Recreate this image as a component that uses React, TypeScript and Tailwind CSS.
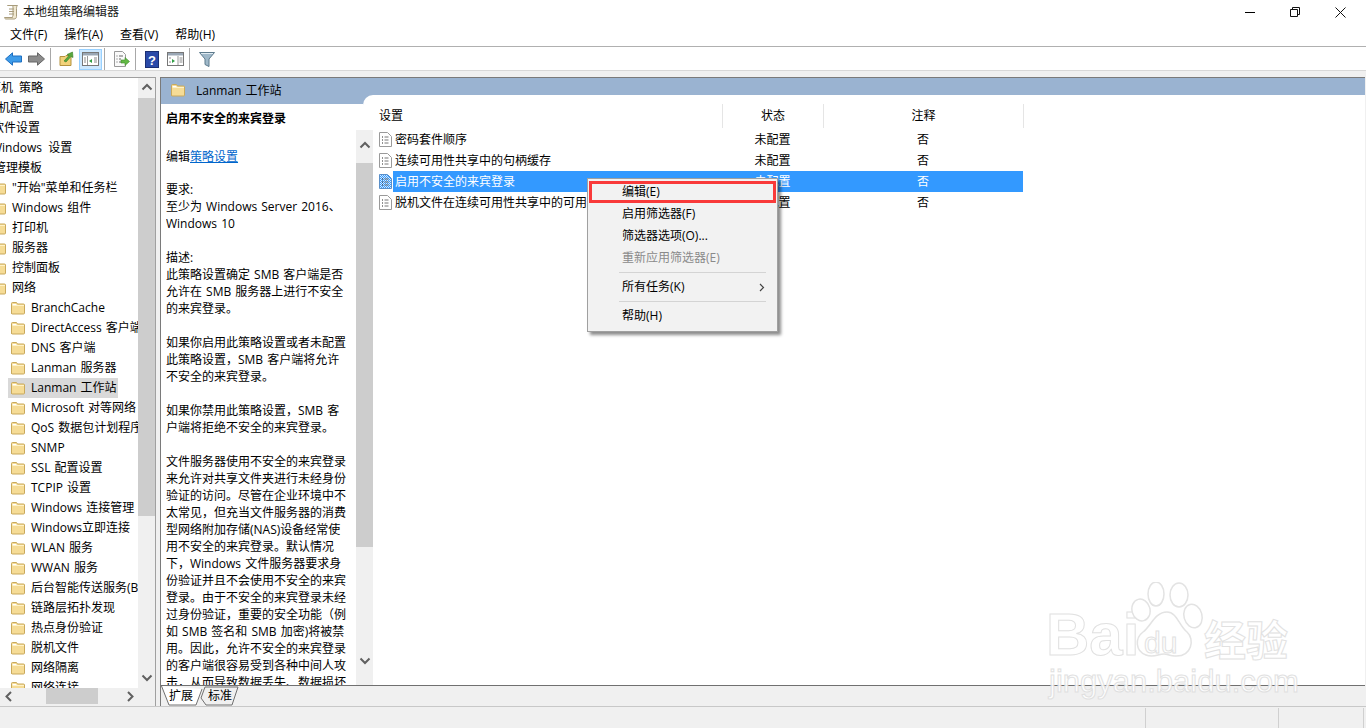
import React from 'react';

const FONT = "font-['Open_Sans','Noto_Sans_CJK_SC',sans-serif]";

const Folder = ({ className = '' }: { className?: string }) => (
  <svg width="16" height="14" viewBox="0 0 16 14" className={className}>
    <path d="M1.5 12.5V2.5q0-1 1-1h4l1 1.5h6q1 0 1 1v8q0 1-1 1h-11q-1 0-1-1z" fill="#f6dc96" stroke="#c9a95c" />
    <path d="M2.5 4.5h11.5" stroke="#fff2c8" />
    <path d="M2.5 3.5h4" stroke="#fff" />
  </svg>
);

const SettingIcon = ({ selected = false }: { selected?: boolean }) => (
  <svg width="13" height="15" viewBox="0 0 13 15" className="shrink-0">
    <defs>
      <pattern id="sel" width="2" height="2" patternUnits="userSpaceOnUse">
        <rect width="2" height="2" fill="#3399ff" />
        <rect width="1" height="1" fill="#d7e9fb" />
        <rect x="1" y="1" width="1" height="1" fill="#d7e9fb" />
      </pattern>
    </defs>
    <path d="M0.5 0.5h8l4 4v10h-12z" fill={selected ? 'url(#sel)' : '#fff'} stroke={selected ? '#5a8fc8' : '#9a9a9a'} />
    <path d="M3 5h1M3 8h1M3 11h1" stroke="#222" strokeWidth="1.2" />
    <path d="M5.5 5h4M5.5 8h4M5.5 11h4" stroke="#777" />
  </svg>
);

const Chevron = ({ dir }: { dir: 'up' | 'down' | 'left' | 'right' }) => {
  const d = {
    up: 'M1.5 6.5L6 2l4.5 4.5',
    down: 'M1.5 2.5L6 7l4.5-4.5',
    left: 'M8 1L3.5 5.5 8 10',
    right: 'M4 1l4.5 4.5L4 10',
  }[dir];
  return (
    <svg width="12" height="11" viewBox="0 0 12 11">
      <path d={d} fill="none" stroke="#606060" strokeWidth="2" />
    </svg>
  );
};

const L1 = '-ml-[9px]';
const L2 = 'ml-[10px]';

const treeRows: { label: string; cls: string; folder?: boolean }[] = [
  { label: '算机 策略', cls: '-ml-[11px] [word-spacing:3px]' },
  { label: '算机配置', cls: '-ml-[14px]' },
  { label: '软件设置', cls: '-ml-[8px]' },
  { label: 'Windows 设置', cls: '-ml-[9px] [word-spacing:3px]' },
  { label: '管理模板', cls: '-ml-[6px]' },
  { label: '"开始"菜单和任务栏', cls: L1, folder: true },
  { label: 'Windows 组件', cls: L1, folder: true },
  { label: '打印机', cls: L1, folder: true },
  { label: '服务器', cls: L1, folder: true },
  { label: '控制面板', cls: L1, folder: true },
  { label: '网络', cls: L1, folder: true },
  { label: 'BranchCache', cls: L2, folder: true },
  { label: 'DirectAccess 客户端', cls: L2, folder: true },
  { label: 'DNS 客户端', cls: L2, folder: true },
  { label: 'Lanman 服务器', cls: L2, folder: true },
  { label: 'Lanman 工作站', cls: 'ml-[8px] pl-[2px] pr-[1px] bg-[#d9d9d9]', folder: true },
  { label: 'Microsoft 对等网络', cls: L2, folder: true },
  { label: 'QoS 数据包计划程序', cls: L2, folder: true },
  { label: 'SNMP', cls: L2, folder: true },
  { label: 'SSL 配置设置', cls: L2, folder: true },
  { label: 'TCPIP 设置', cls: L2, folder: true },
  { label: 'Windows 连接管理', cls: L2, folder: true },
  { label: 'Windows立即连接', cls: L2, folder: true },
  { label: 'WLAN 服务', cls: L2, folder: true },
  { label: 'WWAN 服务', cls: L2, folder: true },
  { label: '后台智能传送服务(BITS)', cls: L2, folder: true },
  { label: '链路层拓扑发现', cls: L2, folder: true },
  { label: '热点身份验证', cls: L2, folder: true },
  { label: '脱机文件', cls: L2, folder: true },
  { label: '网络隔离', cls: L2, folder: true },
  { label: '网络连接', cls: L2, folder: true },
];

const descLines = [
  '要求:',
  '至少为 Windows Server 2016、',
  'Windows 10',
  '',
  '描述:',
  '此策略设置确定 SMB 客户端是否',
  '允许在 SMB 服务器上进行不安全',
  '的来宾登录。',
  '',
  '如果你启用此策略设置或者未配置',
  '此策略设置\uFF0CSMB 客户端将允许',
  '不安全的来宾登录。',
  '',
  '如果你禁用此策略设置\uFF0CSMB 客',
  '户端将拒绝不安全的来宾登录。',
  '',
  '文件服务器使用不安全的来宾登录',
  '来允许对共享文件夹进行未经身份',
  '验证的访问。尽管在企业环境中不',
  '太常见\uFF0C但充当文件服务器的消费',
  '型网络附加存储(NAS)设备经常使',
  '用不安全的来宾登录。默认情况',
  '下\uFF0CWindows 文件服务器要求身',
  '份验证并且不会使用不安全的来宾',
  '登录。由于不安全的来宾登录未经',
  '过身份验证\uFF0C重要的安全功能\uFF08例',
  '如 SMB 签名和 SMB 加密)将被禁',
  '用。因此\uFF0C允许不安全的来宾登录',
  '的客户端很容易受到各种中间人攻',
  '击\uFF0C从而导致数据丢失、数据损坏',
];

const settings = [
  { name: '密码套件顺序' },
  { name: '连续可用性共享中的句柄缓存' },
  { name: '启用不安全的来宾登录', selected: true },
  { name: '脱机文件在连续可用性共享中的可用性' },
];

const ToolSep = () => <div className="w-px h-[22px] bg-[#a8a8a8]" />;

const Toolbar = () => (
  <div className="h-[23px] flex items-center bg-white pt-[1px]">
    <svg width="17" height="14" viewBox="0 0 17 14" className="ml-[5px]">
      <path d="M0.5 7L7.5 0.8V4h9v6h-9v3.2z" fill="#3d9be9" stroke="#1f6fc0" />
    </svg>
    <svg width="17" height="14" viewBox="0 0 17 14" className="ml-[6px]">
      <path d="M16.5 7L9.5 0.8V4h-9v6h9v3.2z" fill="#8c8c8c" stroke="#666" />
    </svg>
    <div className="ml-[5px]"><ToolSep /></div>
    <svg width="16" height="16" viewBox="0 0 16 16" className="ml-[8px]">
      <path d="M1 14.5V5.500h5l1-1h5v10z" fill="#f2d27a" stroke="#b4923f" />
      <path d="M5 10L10 4.500 8 3.500 13.500 1 14 6.500 12 5.500 7 11z" fill="#58a83c" stroke="#3b7d26" strokeWidth="0.6" />
    </svg>
    <div className="ml-[4px] w-[23px] h-[21px] bg-[#cce8ff] border border-[#99d1ff] flex items-center justify-center">
      <svg width="17" height="14" viewBox="0 0 17 14">
        <rect x="0.5" y="0.5" width="16" height="13" fill="#fff" stroke="#777" />
        <rect x="1" y="1" width="15" height="2.5" fill="#9aa7b5" />
        <path d="M10 7v4L7 9z" fill="#2f9e44" />
        <path d="M5.5 4v9" stroke="#999" />
        <path d="M2 6h2M2 8h2M2 10h2M12 6h3M12 8h3M12 10h3" stroke="#8a8a8a" />
      </svg>
    </div>
    <div className="ml-[2px]"><ToolSep /></div>
    <svg width="17" height="16" viewBox="0 0 17 16" className="ml-[8px]">
      <path d="M1.5 0.5h8l3 3v12h-11z" fill="#fafafa" stroke="#999" />
      <path d="M3.5 5h1M3.5 8h1M3.5 11h1M6 5h4M6 8h2M6 11h2" stroke="#666" />
      <path d="M8 9h4V6.5L16.5 10.5 12 14.5v-2.5H8z" fill="#62b945" stroke="#3f8a2a" strokeWidth="0.6" />
    </svg>
    <div className="ml-[5px]"><ToolSep /></div>
    <svg width="14" height="17" viewBox="0 0 14 17" className="ml-[9px]">
      <rect x="0.5" y="0.5" width="13" height="16" fill="#2b4aa8" stroke="#1b2f73" />
      <text x="7" y="13.5" textAnchor="middle" fontSize="13" fontWeight="700" fill="#fff" fontFamily="Liberation Sans">?</text>
    </svg>
    <svg width="17" height="14" viewBox="0 0 17 14" className="ml-[8px]">
      <rect x="0.5" y="0.5" width="16" height="13" fill="#fff" stroke="#777" />
      <rect x="1" y="1" width="15" height="2.5" fill="#9aa7b5" />
      <path d="M5 7v4L8 9z" fill="#2f9e44" />
      <path d="M11 4v9" stroke="#999" />
      <path d="M2 6h2M2 10h2M12.5 6h3M12.5 8h3M12.5 10h3" stroke="#8a8a8a" />
    </svg>
    <div className="ml-[5px]"><ToolSep /></div>
    <svg width="16" height="17" viewBox="0 0 16 17" className="ml-[9px]">
      <path d="M0.5 1.5h15L10 8v7.5l-4-2V8z" fill="#9fb8c9" stroke="#5d7a8c" />
      <path d="M2 2.5h12" stroke="#dfeaf1" />
    </svg>
  </div>
);

const TreePane = () => (
  <div className="w-[156px] shrink-0 bg-[#f0f0f0] border-t border-r border-[#a0a0a0] flex flex-col">
    <div className="h-[610px] flex">
      <div className="w-[138px] bg-white overflow-hidden">
        {treeRows.map((row) => (
          <div key={row.label} className="h-5 flex items-center whitespace-nowrap">
            {row.folder ? (
              <div className={`flex items-center h-5 ${row.cls}`}>
                <Folder className="shrink-0 mr-[5px]" />
                <span>{row.label}</span>
              </div>
            ) : (
              <span className={row.cls}>{row.label}</span>
            )}
          </div>
        ))}
      </div>
      <div className="w-[17px] bg-[#f0f0f0] flex flex-col">
        <div className="h-[20px] flex items-center justify-center"><Chevron dir="up" /></div>
        <div className="h-[418px] bg-[#cdcdcd]" />
        <div className="flex-1" />
        <div className="h-[20px] flex items-center justify-center"><Chevron dir="down" /></div>
      </div>
    </div>
    <div className="h-[16px] flex items-center">
      <div className="w-[46px] pl-[3px]"><Chevron dir="left" /></div>
      <div className="w-[52px] h-full bg-[#cdcdcd]" />
      <div className="ml-[26px]"><Chevron dir="right" /></div>
    </div>
  </div>
);

const DescPane = () => (
  <div className="w-[202px] shrink-0 bg-[#9ab3d1] relative z-10">
    <div className="h-[9px]" />
    <div className="bg-white h-[581px] pl-[5px] relative">
      <div className="h-full overflow-hidden pt-[6px] leading-[17px]">
        <div className="font-bold h-[38px] whitespace-nowrap">启用不安全的来宾登录</div>
        <div className="h-[33px] whitespace-nowrap">
          编辑<span className="text-[#0066cc] underline">策略设置</span>
        </div>
        {descLines.map((line, i) => (
          <div key={i} className="h-[17px] whitespace-nowrap">{line}</div>
        ))}
      </div>
      <div className="absolute -right-[10px] top-[26px] bottom-0 w-[17px] bg-[#f0f0f0] flex flex-col">
        <div className="h-[33px] flex items-center justify-center"><Chevron dir="up" /></div>
        <div className="h-[384px] bg-[#cdcdcd]" />
        <div className="flex-1" />
        <div className="h-[48px] flex items-center justify-center"><Chevron dir="down" /></div>
      </div>
    </div>
  </div>
);

const ListPane = () => (
  <div className="flex-1 bg-white rounded-tl-[10px]">
    <div className="flex h-[24px] mt-[9px]">
      <div className="w-[360px] pl-[16px] border-r border-[#e5e5e5] h-full flex items-center">设置</div>
      <div className="w-[101px] border-r border-[#e5e5e5] h-full flex items-center justify-center">状态</div>
      <div className="w-[200px] border-r border-[#e5e5e5] h-full flex items-center justify-center">注释</div>
    </div>
    <div className="w-[660px] mt-[1px]">
      {settings.map((s) => (
        <div key={s.name} className="flex h-[21px] items-center pl-[16px]">
          <SettingIcon selected={s.selected} />
          <div className={`flex flex-1 h-full items-center ml-[1px] ${s.selected ? 'bg-[#3399ff] text-white' : ''}`}>
            <div className="w-[329px] pl-[2px] whitespace-nowrap overflow-hidden">{s.name}</div>
            <div className="w-[101px] text-center">未配置</div>
            <div className="w-[200px] text-center">否</div>
          </div>
        </div>
      ))}
    </div>
  </div>
);

const ContextMenu = () => (
  <div className="absolute left-[587px] top-[178px] w-[191px] h-[154px] bg-[#f2f2f2] border border-[#a0a0a0] shadow-[3px_3px_3px_rgba(0,0,0,0.45)] pt-[2px] pl-[1px]">
    <div className="h-[22px] w-[187px] border-[3px] border-[#f93a3a] flex items-center pl-[30px]">编辑(E)</div>
    <div className="h-[22px] flex items-center pl-[33px]">启用筛选器(F)</div>
    <div className="h-[22px] flex items-center pl-[33px]">筛选器选项(O)...</div>
    <div className="h-[22px] flex items-center pl-[33px] text-[#8a8a8a]">重新应用筛选器(E)</div>
    <div className="h-px bg-[#d4d4d4] ml-[30px] mr-[11px] mt-[3px] mb-[3px]" />
    <div className="h-[22px] flex items-center pl-[33px] pr-[12px] justify-between">
      所有任务(K)
      <svg width="6" height="9" viewBox="0 0 6 9"><path d="M1 1l3.5 3.5L1 8" fill="none" stroke="#444" strokeWidth="1.2" /></svg>
    </div>
    <div className="h-px bg-[#d4d4d4] ml-[30px] mr-[11px] mt-[3px] mb-[3px]" />
    <div className="h-[22px] flex items-center pl-[33px]">帮助(H)</div>
  </div>
);

const Tabs = () => (
  <div className="h-[20px] flex bg-[#f0f0f0]">
    <div className="relative w-[42px] h-full">
      <svg width="42" height="20" viewBox="0 0 42 20" className="absolute left-0 top-0">
        <path d="M0.5 0L8 19h27L41 3" fill="#fff" stroke="#707070" />
      </svg>
      <span className="absolute left-[8px] top-[1px]">扩展</span>
    </div>
    <div className="relative w-[40px] h-full -ml-[3px]">
      <svg width="40" height="20" viewBox="0 0 40 20" className="absolute left-0 top-0">
        <path d="M1 12L5 1h33L32 19H6z" fill="#f0f0f0" stroke="#707070" />
      </svg>
      <span className="absolute left-[8px] top-[1px]">标准</span>
    </div>
  </div>
);

const Watermark = () => (
  <div className="absolute left-[1046px] top-[582px] w-[260px] h-[120px] pointer-events-none text-white font-['Liberation_Sans',sans-serif] font-bold opacity-90">
    <span className="absolute left-0 top-[23px] text-[60px] leading-[60px] [-webkit-text-stroke:1px_#dedede]">Bai</span>
    <svg width="78" height="80" viewBox="0 0 78 80" className="absolute left-[85px] top-0">
      <g fill="#fff" stroke="#e0e0e0" strokeWidth="1.5">
        <ellipse cx="25" cy="12" rx="8" ry="12" />
        <ellipse cx="48" cy="13" rx="9" ry="12" />
        <ellipse cx="10" cy="28" rx="9" ry="11" transform="rotate(-15 10 28)" />
        <ellipse cx="62" cy="34" rx="9" ry="12" transform="rotate(-15 62 34)" />
        <path d="M36 30c10 0 12 14 20 20 8 7 5 25-12 24-5 0-7-2-11-2-6 0-10 4-18 1C4 69 4 56 12 50c8-6 12-20 24-20z" />
      </g>
    </svg>
    <span className="absolute left-[98px] top-[46px] text-[30px] leading-[30px] font-normal [-webkit-text-stroke:1px_#dedede]">du</span>
    <span className="absolute left-[158px] top-[34px] text-[42px] leading-[44px] font-['Noto_Sans_CJK_SC',sans-serif] [-webkit-text-stroke:1px_#dedede]">经验</span>
    <span className="absolute left-[3px] top-[82px] text-[31px] leading-[36px] font-normal whitespace-nowrap [-webkit-text-stroke:1px_#dedede]">jingyan.baidu.com</span>
  </div>
);

export default function App() {
  return (
    <div className={`relative w-[1366px] h-[728px] overflow-hidden bg-[#f0f0f0] text-[12px] text-black [word-spacing:1px] ${FONT}`}>
      {/* Title bar */}
      <div className="h-[24px] bg-white flex items-center">
        <svg width="15" height="16" viewBox="0 0 15 16" className="ml-[4px]">
          <path d="M3.5 1.5h10c-1 1-1 2-1 3v8c0 1.500-1 2.500-2.500 2.500H2c-1 0-1.500-.8-1.500-1.500h8c0-1 .2-1.500.5-1.500V3c0-1-.5-1.500-1.500-1.500z" fill="#f0e8d0" stroke="#a89c7c" />
          <path d="M5 5h5M5 7.500h5M5 10h5" stroke="#a89c7c" />
        </svg>
        <span className="ml-[4px] text-[#1a1a1a]">本地组策略编辑器</span>
        <div className="ml-auto flex items-center mr-[20px] gap-[35px]">
          <div className="w-[10px] h-px bg-black" />
          <svg width="10" height="10" viewBox="0 0 10 10">
            <path d="M0.5 2.5h7v7h-7zM2.5 2.5v-2h7v7h-2" fill="none" stroke="#111" />
          </svg>
          <svg width="11" height="11" viewBox="0 0 11 11">
            <path d="M0.5 0.5l10 10M10.5 0.5l-10 10" stroke="#111" />
          </svg>
        </div>
      </div>
      {/* Menu bar */}
      <div className="h-[22px] bg-white flex items-center pl-[10px] gap-[17px] border-b border-[#b0b0b0] box-content">
        <span>文件(F)</span>
        <span>操作(A)</span>
        <span>查看(V)</span>
        <span>帮助(H)</span>
      </div>
      <Toolbar />
      <div className="h-[7px] border-t border-[#d8d8d8]" />
      <div className="flex">
        <TreePane />
        <div className="w-[4px]" />
        <div className="w-[1205px] border-t border-l border-[#7a7a7a] flex flex-col bg-[#f0f0f0]">
          <div className="h-[607px] flex flex-col bg-white">
            <div className="h-[17px] bg-[#9ab3d1] flex items-start pl-[9px] pt-[5px] relative z-20">
              <Folder className="shrink-0" />
              <span className="ml-[10px] leading-[15px]">Lanman 工作站</span>
            </div>
            <div className="flex flex-1 bg-[#9ab3d1]">
              <DescPane />
              <ListPane />
            </div>
          </div>
          <div className="border-t border-[#707070]" />
          <Tabs />
        </div>
      </div>
      {/* Status bar */}
      <div className="border-t border-[#c8c8c8] h-[22px] flex justify-end pt-[1px]">
        <div className="w-[133px] border-l border-[#d0d0d0] h-[20px]" />
        <div className="w-[85px] border-l border-[#d0d0d0] h-[20px]" />
        <div className="w-[3px] border-l border-[#d0d0d0] h-[20px]" />
      </div>
      <ContextMenu />
      <Watermark />
    </div>
  );
}
